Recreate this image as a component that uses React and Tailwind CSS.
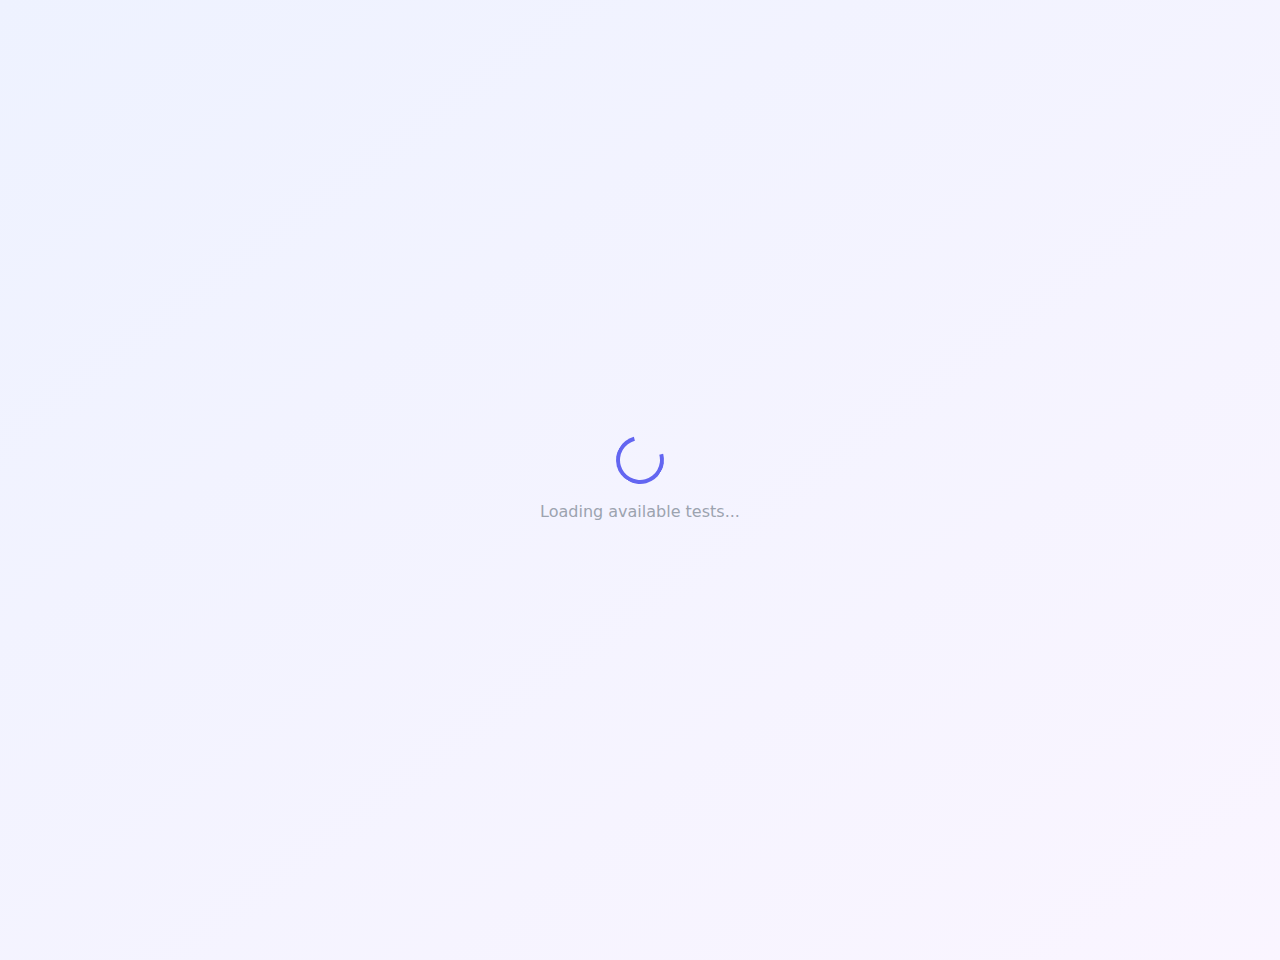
export default function App() {
  return (
    <div
      className="min-h-screen w-full flex items-center justify-center bg-gradient-to-br from-indigo-50 to-purple-50"
      style={{ fontFamily: '"DejaVu Sans", sans-serif' }}
    >
      <div className="flex flex-col items-center">
        {/* spinner, frozen at the frame shown */}
        <div className="h-12 w-12 rounded-full border-4 border-[#6366f1] border-t-transparent rotate-[30deg]"></div>
        <p className="mt-4 text-base text-[#9ca3af]">Loading available tests...</p>
      </div>
    </div>
  );
}
